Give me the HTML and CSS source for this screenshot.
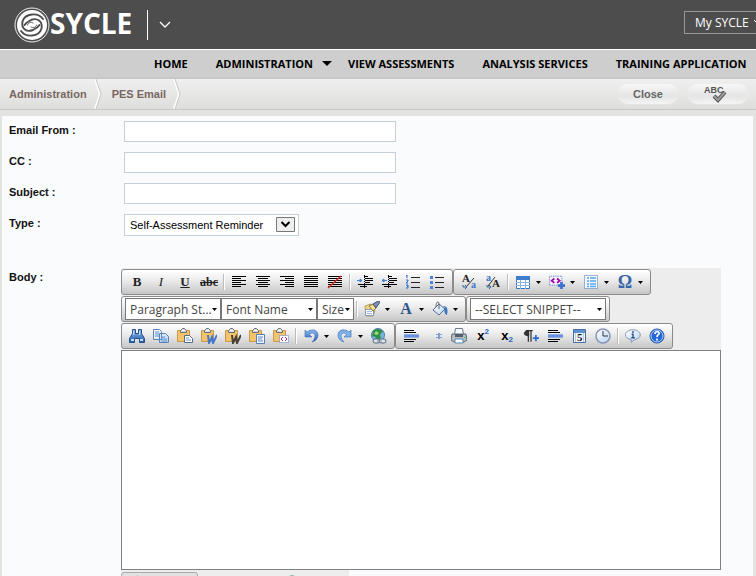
FILE: index.html
```html
<!DOCTYPE html>
<html lang="en">
<head>
<meta charset="utf-8">
<title>PES Email</title>
<link rel="stylesheet" href="styles.css">
</head>
<body>
<svg class="sprite" aria-hidden="true">
  <defs>
    <linearGradient id="blue" x1="0" y1="0" x2="0" y2="1"><stop offset="0" stop-color="#8db8ee"/><stop offset="1" stop-color="#2458ad"/></linearGradient>
    <linearGradient id="sky" x1="0" y1="0" x2="1" y2="1"><stop offset="0" stop-color="#fff"/><stop offset="1" stop-color="#b9d2f1"/></linearGradient>
  </defs>
  <symbol id="arrow" viewBox="0 0 5 3"><path d="M0 0h5L2.5 3z"/></symbol>
  <symbol id="left" viewBox="0 0 16 16"><path d="M1 2.500h14M1 4.500h9M1 6.500h14M1 8.500h9M1 10.500h14M1 12.500h9" stroke="#000"/></symbol>
  <symbol id="center" viewBox="0 0 16 16"><path d="M1 2.500h14M3 4.500h10M1 6.500h14M3 8.500h10M1 10.500h14M3 12.500h10" stroke="#000"/></symbol>
  <symbol id="right" viewBox="0 0 16 16"><path d="M1 2.500h14M6 4.500h9M1 6.500h14M6 8.500h9M1 10.500h14M6 12.500h9" stroke="#000"/></symbol>
  <symbol id="full" viewBox="0 0 16 16"><path d="M1 2.500h14M1 4.500h14M1 6.500h14M1 8.500h14M1 10.500h14M1 12.500h14" stroke="#000"/></symbol>
  <symbol id="none" viewBox="0 0 16 16"><use href="#full"/><path d="M1 14 14 2" stroke="#e0281e" stroke-width="1.500"/></symbol>
  <symbol id="indent" viewBox="0 0 16 16"><path d="M7 2.500h4M8 4.500h8M8 6.500h8M8 8.500h5M1 10.500h15M3 12.500h7" stroke="#000"/><path d="M7.500 1v14" stroke="#000" stroke-dasharray="1 1"/><path d="M0 6.500h4M3 5l2 1.500L3 8z" stroke="#3f80d8" fill="#3f80d8"/></symbol>
  <symbol id="outdent" viewBox="0 0 16 16"><path d="M7 2.500h4M8 4.500h8M8 6.500h8M8 8.500h5M1 10.500h15M3 12.500h7" stroke="#000"/><path d="M7.500 1v14" stroke="#000" stroke-dasharray="1 1"/><path d="M6 6.500H2M3 5 1 6.500 3 8z" stroke="#3f80d8" fill="#3f80d8"/></symbol>
  <symbol id="numbers" viewBox="0 0 16 16"><path d="M6 3.500h9M6 8.500h9M6 13.500h9" stroke="#222"/><path d="M1 2l1-1v3M1 6h2v1L1 9h2M1 11h2v1H2h1v2H1" stroke="#2c6bd0" fill="none"/></symbol>
  <symbol id="bullets" viewBox="0 0 16 16"><path d="M6 3.500h9M6 8.500h9M6 13.500h9" stroke="#222"/><path d="M1 2h3v3H1zM1 7h3v3H1zM1 12h3v3H1z" fill="#4a83d5"/></symbol>
  <symbol id="table" viewBox="0 0 16 16"><path d="M1.500 2.500h13v12h-13z" fill="#fff" stroke="#3974c0"/><path d="M1 2h14v4H1z" fill="#3d7bcc"/><path d="M1 8.500h14M1 11.500h14M5.500 6v9M10.500 6v9" stroke="#8fb3df"/></symbol>
  <symbol id="code" viewBox="0 0 18 16"><path d="M.5 1.500h14v10H.5z" fill="#f5f5ff" stroke="#4166bd" stroke-dasharray="1 1"/><path d="M6 4 3 6.500 6 9M9 4l3 2.500L9 9" fill="none" stroke="#a500a5" stroke-width="2"/><path d="M14 8v8M10 12h8" stroke="#3b72ce" stroke-width="3"/></symbol>
  <symbol id="form" viewBox="0 0 16 16"><path d="M1.500 1.500h13v13h-13z" fill="#f3f8ff" stroke="#4c71a5" stroke-dasharray="1 1"/><path d="M4 4h2M4 7h2M4 10h2M4 12.500h2M7 4h6M7 7h6M7 10h6M7 12.500h6" stroke="#55a4f0" stroke-width="1.500"/></symbol>
  <symbol id="brush" viewBox="0 0 16 16"><path d="m1 5 6-2 4 6-2 6H2z" fill="#f2d583" stroke="#b39d60"/><path d="M1.500 8.500h8v6h-8z" fill="#fff" stroke="#8b97ab"/><path d="M3 10.500h5M3 12.500h5" stroke="#9bb8dc"/><path d="m5 5 4-2 3 4-3 3z" fill="#f6e08e" stroke="#867748"/><path d="m9 3 5-3 2 1-4 6z" fill="#7f8db8" stroke="#445274"/></symbol>
  <symbol id="bucket" viewBox="0 0 16 16"><path d="m1 9 6-6 6 5-6 6z" fill="url(#sky)" stroke="#536b8c"/><path d="M7 8V2c-2-3-3 1-3 4" fill="none" stroke="#5e6470"/><path d="M11 5c5 0 5 4 4 9-3-1-3-5-2-7z" fill="#3e76c6"/></symbol>
  <symbol id="find" viewBox="0 0 16 16"><path d="M3.500 1.500h3v4h3v-4h3v4l3 5v4h-5v-4h-5v4h-5v-4l3-5z" fill="url(#blue)" stroke="#24508e"/><path d="M2 12h3M11 12h3" stroke="#bde0ff" stroke-width="2"/><path d="M4.500 3v4M10.500 3v4" stroke="#c7e2ff"/></symbol>
  <symbol id="copy" viewBox="0 0 16 16"><path d="M.5 1.500h6l2 2v8h-8zM6.500 5.500h6l3 3v6h-9z" fill="url(#sky)" stroke="#5a82bb"/><path d="M2 4h4M2 6h4M2 8h4M8 9h4M8 11h6M8 13h6" stroke="#5a91d5"/></symbol>
  <symbol id="clip" viewBox="0 0 16 16"><path d="M.5 2.500h12v11H.5z" fill="#f3c46b" stroke="#ca9647"/><path d="M3.500 4.500v-2l2-2h2l2 2v2z" fill="#d7d9dd" stroke="#6d7175"/><path d="M5 2.500h3" stroke="#fff"/></symbol>
  <symbol id="paste" viewBox="0 0 16 16"><use href="#clip"/><path d="M7.500 7.500h5l3 3v4h-8z" fill="#fff" stroke="#526c8d"/><path d="M9 10h3M9 12h5" stroke="#7694bb"/></symbol>
  <symbol id="pasteword" viewBox="0 0 16 16"><use href="#clip"/><path d="m7 7 1 8 3-6 1 6 4-8" stroke="#4278cf" stroke-width="2" fill="none"/></symbol>
  <symbol id="pastestrip" viewBox="0 0 16 16"><use href="#clip"/><path d="m7 7 1 8 3-6 1 6 4-8" stroke="#45413c" stroke-width="2" fill="none"/></symbol>
  <symbol id="pastetext" viewBox="0 0 16 16"><use href="#clip"/><path d="M7.500 6.500h8v9h-8z" fill="#eff6ff" stroke="#587eb3"/><path d="M9 9h5M9 11h4M9 13h5" stroke="#5d87c2"/></symbol>
  <symbol id="pastehtml" viewBox="0 0 16 16"><use href="#clip"/><path d="M6.500 7.500h9v7h-9z" fill="#fff" stroke="#5582c4" stroke-dasharray="1 1"/><path d="m10 9-2 2 2 2M12 9l2 2-2 2" stroke="#a12ba1" fill="none"/></symbol>
  <symbol id="undo" viewBox="0 0 16 16"><path d="M2 2v7h7L6.500 6.500C9 4 12 5 12 8c0 3-2 5-3 6 4-1 6-4 6-7 0-5-6-7-11-3z" fill="url(#blue)" stroke="#3e6fb9" stroke-width=".6"/></symbol>
  <symbol id="redo" viewBox="0 0 16 16"><path d="M14 2v7H7l2.500-2.500C7 4 4 5 4 8c0 3 2 5 3 6-4-1-6-4-6-7 0-5 6-7 11-3z" fill="#80b2e8" stroke="#4c82c4" stroke-width=".8"/></symbol>
  <symbol id="link" viewBox="0 0 16 16"><circle cx="7" cy="7" r="6.500" fill="#79b5e2" stroke="#4a7db1"/><path d="M2 3c3-3 8-2 10 0L9 7l1 3-3 2-4-4-2 1z" fill="#319047"/><path d="m5 3 3 2-2 2-3-1z" fill="#a6da70"/><rect x="2" y="11" width="7" height="4" rx="2" fill="#e0e4ea" stroke="#536981"/><rect x="8" y="11" width="7" height="4" rx="2" fill="#e0e4ea" stroke="#536981"/><path d="M6 13h5" stroke="#7b91aa"/></symbol>
  <symbol id="rule" viewBox="0 0 16 16"><path d="M1 2.500h10M1 4.500h12M1 11.500h12M1 13.500h10" stroke="#000"/><path d="M1 8h15" stroke="#4173d1" stroke-width="3"/><path d="M1 8h15" stroke="#8bb0f2"/></symbol>
  <symbol id="star" viewBox="0 0 16 16"><path d="M11 5h2v6h-2zM9 6h6v1H9zM9 9h6v1H9z" fill="#7f9fd3"/></symbol>
  <symbol id="print" viewBox="0 0 16 16"><path d="M4.500.5h7l1 6h-9z" fill="#f9fcff" stroke="#6c7b90"/><path d="M1 6h14l1 6-3 2H3l-3-2z" fill="#b5bec6" stroke="#606870"/><path d="M4 6h8v3H4z" fill="#53606a"/><path d="M4 11h8v4H4z" fill="#fff" stroke="#5989b5"/><path d="M13 9.500h2" stroke="#4ac868"/></symbol>
  <symbol id="paragraph" viewBox="0 0 18 16"><path d="M9 2.500v12M6 2.500v12M3 2h8" stroke="#333" stroke-width="1.400"/><path d="M7 1.500c-8 0-8 7 0 7z" fill="#333"/><path d="M14.500 7v7M11 10.500h7" stroke="#2e6dcf" stroke-width="2"/></symbol>
  <symbol id="clock" viewBox="0 0 16 16"><circle cx="8" cy="8" r="7" fill="url(#sky)" stroke="#8596b3" stroke-width="1.500"/><path d="M8 3v5h5" fill="none" stroke="#333"/></symbol>
  <symbol id="info" viewBox="0 0 18 16"><path d="M9 1c10 0 11 10 2 11l-4 3v-3C-2 11-2 1 9 1z" fill="url(#sky)" stroke="#7b8fac"/><path d="M9 2.500v2M7.500 6H9v4M7 10h4" stroke="#24508e" stroke-width="1.500" fill="none"/></symbol>
  <symbol id="help" viewBox="0 0 16 16"><circle cx="8" cy="8" r="7" fill="#2467d8" stroke="#164da3"/><circle cx="8" cy="8" r="6" fill="none" stroke="#b9d8fa"/><path d="M6 6c0-3 5-3 4 0-1 1-2 1-2 3M8 10.500v2" fill="none" stroke="#fff" stroke-width="1.700"/></symbol>
</svg>

<header class="masthead">
  <a class="brand" href="#">
    <svg class="logo" viewBox="0 0 36 36" aria-hidden="true">
      <circle cx="18" cy="18" r="17" fill="none" stroke="#fff" stroke-width=".9"/>
      <circle cx="18" cy="18" r="15" fill="#fff"/>
      <g fill="none" stroke="#4d4d4d" stroke-width="1.900" stroke-linecap="round">
        <path id="swirl" d="M29 12C24 5 11 6 8.500 14.500 7 22 13 25.500 19 23 22 21.500 24 20.500 25.500 18"/>
        <use href="#swirl" transform="rotate(180 18 18)"/>
        <path d="M13.500 18C14 15.500 17 14.500 19 16M22.500 18C22 20.500 19 21.500 17 20" stroke-width="1"/>
      </g>
    </svg>
    <span>SYCLE</span>
  </a>
  <button class="switcher" aria-label="Switch application"><svg viewBox="0 0 12 8" aria-hidden="true"><path d="m1 1 5 5 5-5" fill="none" stroke="#fff" stroke-width="1.300"/></svg></button>
  <button class="account">My SYCLE <svg viewBox="0 0 9 6" aria-hidden="true"><path d="m1 1 3.500 3.500L8 1" fill="none" stroke="#fff"/></svg></button>
</header>

<nav class="menu">
  <a href="#">HOME</a>
  <a href="#">ADMINISTRATION<svg viewBox="0 0 10 5" aria-hidden="true"><path d="M0 0h10L5 5z"/></svg></a>
  <a href="#">VIEW ASSESSMENTS</a>
  <a href="#">ANALYSIS SERVICES</a>
  <a href="#">TRAINING APPLICATION</a>
</nav>

<div class="crumbs">
  <a href="#">Administration</a>
  <svg viewBox="0 0 8 30" aria-hidden="true"><path d="m1 0 5 15-5 15" fill="none" stroke="#fff" stroke-width="2"/><path d="m2 0 5 15-5 15" fill="none" stroke="#c6c6c6"/></svg>
  <a href="#">PES Email</a>
  <svg viewBox="0 0 8 30" aria-hidden="true"><path d="m1 0 5 15-5 15" fill="none" stroke="#fff" stroke-width="2"/><path d="m2 0 5 15-5 15" fill="none" stroke="#c6c6c6"/></svg>
  <div class="actions">
    <button class="pill">Close</button>
    <button class="pill" aria-label="Spell check"><svg viewBox="0 0 28 20" aria-hidden="true"><text x="0" y="9">ABC</text><path d="m10 12 4 4 7-8" fill="none" stroke="#555" stroke-width="4"/><path d="m10 12 4 4 7-8" fill="none" stroke="#999" stroke-width="2"/></svg></button>
  </div>
</div>

<main class="panel">
  <form class="fields">
    <label for="from">Email From :</label><input id="from" type="text">
    <label for="cc">CC :</label><input id="cc" type="text">
    <label for="subject">Subject :</label><input id="subject" type="text">
    <label for="type">Type :</label>
    <div class="type"><select id="type"><option>Self-Assessment Reminder</option></select><svg viewBox="0 0 19 15" aria-hidden="true"><path d="M.5.5h18v14H.5z" fill="#eee" stroke="#777"/><path d="m5.500 5 4 4 4-4" fill="none" stroke="#000" stroke-width="2"/></svg></div>
    <label class="body-label" for="body">Body :</label>
    <div class="editor">
      <div class="tools">
        <div class="row">
          <div class="group">
            <button type="button" class="bold">B</button><button type="button" class="italic">I</button><button type="button" class="underline">U</button><button type="button" class="strike">abc</button><i></i>
            <button type="button" aria-label="Align left"><svg><use href="#left"/></svg></button><button type="button" aria-label="Align center"><svg><use href="#center"/></svg></button><button type="button" aria-label="Align right"><svg><use href="#right"/></svg></button><button type="button" aria-label="Justify"><svg><use href="#full"/></svg></button><button type="button" aria-label="Remove alignment"><svg><use href="#none"/></svg></button><i></i>
            <button type="button" aria-label="Indent"><svg><use href="#indent"/></svg></button><button type="button" aria-label="Outdent"><svg><use href="#outdent"/></svg></button><button type="button" aria-label="Numbered list"><svg><use href="#numbers"/></svg></button><button type="button" aria-label="Bullet list"><svg><use href="#bullets"/></svg></button>
          </div>
          <div class="group">
            <button type="button" aria-label="Lower case"><svg class="letters" viewBox="0 0 18 20"><text x="2" y="10">A</text><path d="M6 15 14 6" stroke="#333"/><text class="small-letter" x="11" y="16">a</text><path d="M3 13v2h4M5 13l2 2-2 2" fill="none" stroke="#39669f"/></svg></button><button type="button" aria-label="Upper case"><svg class="letters" viewBox="0 0 18 20"><text class="small-letter" x="2" y="9">a</text><path d="M4 14 11 5" stroke="#333"/><text x="8" y="15">A</text><path d="M3 13v2h4M5 13l2 2-2 2" fill="none" stroke="#39669f"/></svg></button><i></i>
            <button type="button" class="split" aria-label="Insert table"><svg><use href="#table"/></svg><svg class="arrow"><use href="#arrow"/></svg></button><button type="button" class="split" aria-label="Insert code"><svg><use href="#code"/></svg><svg class="arrow"><use href="#arrow"/></svg></button><button type="button" class="split" aria-label="Insert form element"><svg><use href="#form"/></svg><svg class="arrow"><use href="#arrow"/></svg></button><button type="button" class="split symbol"><span>Ω</span><svg class="arrow"><use href="#arrow"/></svg></button>
          </div>
        </div>
        <div class="row">
          <div class="group">
            <div class="combo"><select aria-label="Paragraph style"><option>Paragraph St...</option></select><svg class="arrow"><use href="#arrow"/></svg></div><div class="combo"><select aria-label="Font name"><option>Font Name</option></select><svg class="arrow"><use href="#arrow"/></svg></div><div class="combo size"><select aria-label="Font size"><option>Size</option></select><svg class="arrow"><use href="#arrow"/></svg></div><i></i>
            <button type="button" class="split" aria-label="Format stripper"><svg><use href="#brush"/></svg><svg class="arrow"><use href="#arrow"/></svg></button><button type="button" class="split symbol color"><span>A</span><svg class="arrow"><use href="#arrow"/></svg></button><button type="button" class="split" aria-label="Background color"><svg><use href="#bucket"/></svg><svg class="arrow"><use href="#arrow"/></svg></button>
          </div>
          <div class="group">
            <div class="combo snippet"><select aria-label="Snippet"><option>--SELECT SNIPPET--</option></select><svg class="arrow"><use href="#arrow"/></svg></div>
          </div>
        </div>
        <div class="row">
          <div class="group">
            <button type="button" aria-label="Find"><svg><use href="#find"/></svg></button><button type="button" aria-label="Copy"><svg><use href="#copy"/></svg></button><button type="button" aria-label="Paste"><svg><use href="#paste"/></svg></button><button type="button" aria-label="Paste from Word"><svg><use href="#pasteword"/></svg></button><button type="button" aria-label="Paste from Word, strip font"><svg><use href="#pastestrip"/></svg></button><button type="button" aria-label="Paste text"><svg><use href="#pastetext"/></svg></button><button type="button" aria-label="Paste as HTML"><svg><use href="#pastehtml"/></svg></button><i></i>
            <button type="button" class="split" aria-label="Undo"><svg><use href="#undo"/></svg><svg class="arrow"><use href="#arrow"/></svg></button><button type="button" class="split" aria-label="Redo"><svg><use href="#redo"/></svg><svg class="arrow"><use href="#arrow"/></svg></button><button type="button" aria-label="Link"><svg><use href="#link"/></svg></button>
          </div>
          <div class="group">
            <button type="button" aria-label="Horizontal rule"><svg><use href="#rule"/></svg></button><button type="button" aria-label="Special mark"><svg><use href="#star"/></svg></button><button type="button" aria-label="Print"><svg><use href="#print"/></svg></button><button type="button" class="script">x<sup>2</sup></button><button type="button" class="script">x<sub>2</sub></button><button type="button" aria-label="New paragraph"><svg><use href="#paragraph"/></svg></button><button type="button" aria-label="Insert rule"><svg><use href="#rule"/></svg></button><button type="button" aria-label="Insert date"><svg viewBox="0 0 16 16"><path d="M2.500 1.500h12v13h-12z" fill="#eef4fc" stroke="#4b6e9d"/><path d="M3 2h11v3H3z" fill="#5c93d7"/><path d="M4.500 5v9M12.500 5v9" stroke="#b7cbe5"/><text x="6" y="13">5</text></svg></button><button type="button" aria-label="Insert time"><svg><use href="#clock"/></svg></button><i></i>
            <button type="button" aria-label="About"><svg><use href="#info"/></svg></button><button type="button" aria-label="Help"><svg><use href="#help"/></svg></button>
          </div>
        </div>
      </div>
      <textarea id="body"></textarea>
      <div class="modes">
        <button type="button" class="current" aria-label="Design"><svg viewBox="0 0 16 16"><path d="m5 0 10 12-10 1z" fill="#b06a70"/></svg></button>
        <button type="button" aria-label="HTML"></button>
        <button type="button" aria-label="Preview"><svg viewBox="0 0 16 16"><circle cx="8" cy="8" r="7" fill="#2a8a55" stroke="#1c5738"/></svg></button>
      </div>
    </div>
  </form>
</main>
</body>
</html>
```

FILE: styles.css
```css
* { box-sizing: border-box; }
html { height: 100%; }
body {
  height: 100%;
  margin: 0;
  overflow: hidden;
  display: flex;
  flex-direction: column;
  background: #e3e3e1;
  color: #111;
  font: bold 11px "Liberation Sans", Arial, sans-serif;
}
a { color: inherit; text-decoration: none; }
button, select, input, textarea { font: inherit; color: inherit; }
button { margin: 0; padding: 0; border: 0; background: none; }
.sprite { position: absolute; width: 0; height: 0; }

.masthead {
  flex: none;
  display: flex;
  align-items: center;
  height: 50px;
  padding-left: 14px;
  background: #4d4d4d;
  border-bottom: 1px solid #fff;
  color: #fff;
}
.brand {
  display: flex;
  align-items: center;
  font: bold 28px/32px "Open Sans", sans-serif;
}
.brand span { padding-bottom: 4px; }
.logo { width: 36px; height: 36px; }
.switcher {
  height: 30px;
  margin-left: 15px;
  padding-left: 11px;
  border-left: 1px solid #fff;
}
.switcher svg { display: block; width: 12px; height: 8px; }
.account {
  display: flex;
  align-items: center;
  gap: 4px;
  height: 23px;
  width: 92px;
  margin-left: auto;
  margin-right: -20px;
  margin-bottom: 5px;
  padding-left: 10px;
  border: 1px solid #999;
  font: 12px "Open Sans", sans-serif;
  white-space: nowrap;
}
.account svg { width: 9px; height: 6px; flex: none; }

.menu {
  flex: none;
  display: flex;
  align-items: center;
  gap: 28px;
  height: 29px;
  padding-left: 154px;
  background: #cecece;
  border-bottom: 2px solid #c8c8c8;
  color: #000;
  font: bold 11px "Open Sans", sans-serif;
  white-space: nowrap;
}
.menu svg { width: 10px; height: 5px; margin: 0 -12px 2px 9px; }

.crumbs {
  flex: none;
  display: flex;
  align-items: center;
  height: 31px;
  padding-left: 9px;
  background: linear-gradient(#efefef, #dededc);
  border-bottom: 1px solid #c8c8c8;
  color: #786762;
}
.crumbs > svg { width: 8px; height: 30px; margin: 0 10px 0 7px; }
.actions { display: flex; gap: 10px; margin: 0 8px 0 auto; }
.pill {
  display: flex;
  align-items: center;
  justify-content: center;
  width: 60px;
  height: 20px;
  border-radius: 10px;
  background: linear-gradient(#f7f7f7, #e5e5e5 60%, #f4f4f4);
  box-shadow: 0 0 1px #fff;
  color: #666;
}
.pill svg { width: 28px; height: 20px; }
.pill text { font: bold 9px "Liberation Sans", sans-serif; fill: #555; }

.panel {
  flex: 1 0 auto;
  margin: 6px 3px 0 2px;
  padding: 5px 7px;
  background: #fafbfd;
}
.fields {
  display: grid;
  grid-template-columns: 112px minmax(0, 600px);
  row-gap: 10px;
}
.fields > label { line-height: 18px; }
.fields > input {
  width: 272px;
  height: 21px;
  margin-left: 3px;
  padding: 0 5px;
  border: 1px solid #c5cfda;
  background: #fff;
  font-weight: normal;
}
.type { position: relative; width: 175px; margin-left: 3px; }
.type select {
  display: block;
  appearance: none;
  width: 100%;
  height: 22px;
  padding: 0 5px;
  border: 1px solid #c5cfda;
  border-radius: 0;
  background: #fff;
  color: #000;
  font-weight: normal;
}
.type svg {
  position: absolute;
  top: 3px;
  right: 4px;
  width: 19px;
  height: 15px;
  pointer-events: none;
}
.fields > .body-label { margin-top: 22px; }
.editor { margin-top: 22px; background: #fafbfd; }
.tools { padding-top: 1px; background: #ededed; }
.row { display: flex; height: 27px; }
.group {
  display: flex;
  align-items: center;
  height: 26px;
  padding: 0 3px;
  border: 1px solid #8b8b8b;
  border-radius: 3px;
  background: linear-gradient(#fff, #ededed 40%, #c6c6c6);
}
.group i {
  width: 6px;
  height: 16px;
  background: linear-gradient(90deg, transparent 2px, #bbb 2px, #bbb 3px, #fff 3px, #fff 4px, transparent 4px);
}
.group button {
  display: flex;
  align-items: center;
  justify-content: center;
  width: 24px;
  height: 24px;
  font: bold 13px "Liberation Serif", serif;
  color: #222;
}
.group button svg { width: 16px; height: 16px; }
.group button .letters { width: 18px; height: 20px; }
.group text { font: bold 11px "Liberation Serif", serif; fill: #222; }
.group .small-letter { font-size: 10px; fill: #3974c7; }
.group .italic { font-style: italic; font-weight: normal; }
.group .underline { text-decoration: underline; }
.group .strike { font-size: 12px; text-decoration: line-through; }
.group .script { font: bold 13px/16px "Liberation Sans", sans-serif; color: #000; }
.script sup, .script sub { font-size: 8px; line-height: 8px; color: #2c64c4; }
.script sup { align-self: flex-start; margin-top: 4px; }
.script sub { align-self: flex-end; margin-bottom: 4px; }
.group .split { width: 34px; justify-content: flex-start; padding-left: 4px; gap: 5px; }
.group .symbol { font-size: 18px; line-height: 20px; color: #3567aa; }
.group .color { font-size: 16px; color: #2b548c; }
.symbol span { width: 16px; text-align: center; }
.group button .arrow, .combo .arrow { width: 5px; height: 3px; }
.combo { position: relative; width: 96px; }
.combo select {
  display: block;
  appearance: none;
  width: 100%;
  height: 22px;
  padding: 0 4px;
  border: 1px solid #777;
  border-radius: 0;
  background: #fff;
  color: #444;
  font: 12px "Open Sans", sans-serif;
}
.combo .arrow {
  position: absolute;
  top: 10px;
  right: 4px;
  pointer-events: none;
}
.combo.size { width: 37px; }
.combo.snippet { width: 136px; }
.editor textarea {
  display: block;
  width: 100%;
  height: 220px;
  border: 1px solid #808080;
  background: #fff;
  resize: none;
  font-weight: normal;
}
.modes {
  display: flex;
  width: 228px;
  height: 26px;
  padding-top: 2px;
  background: #ededed;
}
.modes button { flex: 1; height: 22px; }
.modes .current { border: 1px solid #aaa; border-radius: 3px; background: #e2e2e2; }
.modes svg { display: block; width: 16px; height: 16px; margin: 1px 10px; }
```
